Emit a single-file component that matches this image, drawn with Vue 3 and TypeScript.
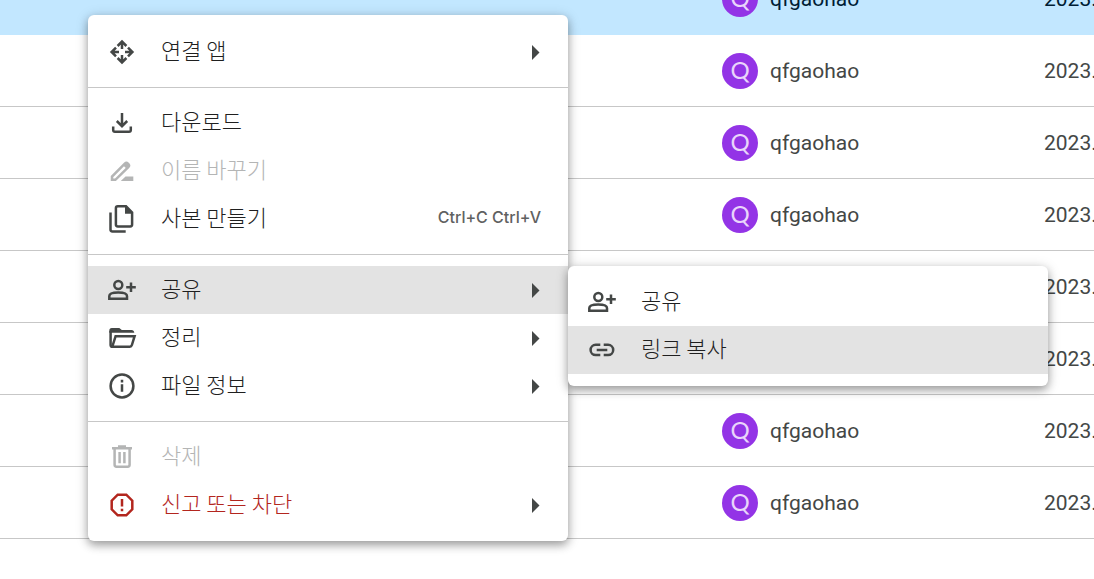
<script setup lang="ts">
import { ref } from 'vue'

type IconName =
  | 'move' | 'download' | 'rename' | 'copy' | 'share'
  | 'folder' | 'info' | 'trash' | 'report' | 'link'

interface Shape {
  d: string
  fill?: boolean
}

interface MenuItem {
  label: string
  icon: IconName
  shortcut?: string
  submenu?: boolean
  disabled?: boolean
  danger?: boolean
  children?: MenuItem[]
}

const icons: Record<IconName, Shape[]> = {
  move: [
    { d: 'M15 5V12M10.6 9L15 4.6L19.4 9' },
    { d: 'M15 25V18M10.6 21L15 25.4L19.4 21' },
    { d: 'M5 15H12M9 10.6L4.6 15L9 19.4' },
    { d: 'M25 15H18M21 10.6L25.4 15L21 19.4' },
  ],
  download: [
    { d: 'M15 5V18.2M9.8 13L15 18.2L20.2 13' },
    { d: 'M6.2 18.4V22Q6.2 23.8 8 23.8H22Q23.8 23.8 23.8 22V18.4' },
  ],
  rename: [
    { d: 'M5 23.8V20.6L17.8 7.6Q19.4 6.1 20.9 7.6L21.4 8.1Q22.8 9.6 21.3 11.1L8.4 23.8Z' },
    { d: 'M16 9.2L19 6.4L22.8 10L19.8 13Z', fill: true },
    { d: 'M13.8 25L18.5 20.4H26.3V25Z', fill: true },
  ],
  copy: [
    { d: 'M19 2.2H10.8Q8.9 2.2 8.9 4.1V20.6Q8.9 22.5 10.8 22.5H23.2Q25.1 22.5 25.1 20.6V8.6Z' },
    { d: 'M18 2L26 9.8H18Z', fill: true },
    { d: 'M3.5 8.4V25.5Q3.5 27.4 5.4 27.4H18.7' },
  ],
  share: [
    { d: 'M15.3 10A4 4 0 1 1 7.3 10A4 4 0 1 1 15.3 10Z' },
    { d: 'M2.3 23.7V20.9Q2.3 17.4 11.2 17.4Q20 17.4 20 20.9V23.7Z' },
    { d: 'M24 7.5V17M19.2 12.3H28.8' },
  ],
  folder: [
    { d: 'M2.3 7.5Q2.3 5 4.8 5H12.3L14.8 7H24.5Q27 7 27.3 9.8H2.3Z', fill: true },
    { d: 'M3.6 8V22Q3.6 23.7 5.5 23.7' },
    { d: 'M8.6 13.2H27.6L24.9 22Q24.4 23.7 22.8 23.7H5.3Z' },
  ],
  info: [
    { d: 'M26.4 15A11.4 11.4 0 1 1 3.6 15A11.4 11.4 0 1 1 26.4 15Z' },
    { d: 'M15 13.3V20.8M15 8.8V11.4' },
  ],
  trash: [
    { d: 'M5 5H11V3.3H19V5H25V7.5H5Z', fill: true },
    { d: 'M7.6 7V22.8Q7.6 24.7 9.5 24.7H20.7Q22.6 24.7 22.6 22.8V7' },
    { d: 'M12.6 10V21.3M17.4 10V21.3' },
  ],
  report: [
    { d: 'M10.7 4.7H19.3L25.3 10.7V19.3L19.3 25.3H10.7L4.7 19.3V10.7Z' },
    { d: 'M15 9V16.6M15 18.8V21.3' },
  ],
  link: [
    { d: 'M13.3 9.8H8.7A5.1 5.1 0 0 0 8.7 20H13.3M16.7 9.8H21.1A5.1 5.1 0 0 1 21.1 20H16.7' },
    { d: 'M9.7 15H20.3' },
  ],
}

const groups: MenuItem[][] = [
  [{ label: '연결 앱', icon: 'move', submenu: true }],
  [
    { label: '다운로드', icon: 'download' },
    { label: '이름 바꾸기', icon: 'rename', disabled: true },
    { label: '사본 만들기', icon: 'copy', shortcut: 'Ctrl+C Ctrl+V' },
  ],
  [
    {
      label: '공유',
      icon: 'share',
      submenu: true,
      children: [
        { label: '공유', icon: 'share' },
        { label: '링크 복사', icon: 'link' },
      ],
    },
    { label: '정리', icon: 'folder', submenu: true },
    { label: '파일 정보', icon: 'info', submenu: true },
  ],
  [
    { label: '삭제', icon: 'trash', disabled: true },
    { label: '신고 또는 차단', icon: 'report', submenu: true, danger: true },
  ],
]

const files = Array.from({ length: 8 }, (_, id) => ({ id, owner: 'qfgaohao', date: '2023.' }))
const selectedFile = ref(0)
const openItem = ref('공유')
const activeChild = ref('링크 복사')
</script>

<template>
  <main class="page">
    <table class="files">
      <tbody>
        <tr
          v-for="file in files"
          :key="file.id"
          :class="{ selected: file.id === selectedFile }"
          @click="selectedFile = file.id"
        >
          <td class="name"></td>
          <td class="owner">
            <div class="person">
              <span class="avatar" aria-hidden="true">Q</span>
              <span>{{ file.owner }}</span>
            </div>
          </td>
          <td class="date">{{ file.date }}</td>
        </tr>
      </tbody>
    </table>

    <div class="menu context" role="menu">
      <div v-for="(group, g) in groups" :key="g" class="group" role="group">
        <div v-for="item in group" :key="item.label" class="entry">
          <button
            type="button"
            role="menuitem"
            class="item"
            :class="{ active: item.label === openItem, danger: item.danger }"
            :disabled="item.disabled"
            @click="openItem = item.label"
          >
            <svg class="icon" viewBox="0 0 30 30" aria-hidden="true">
              <path
                v-for="(shape, s) in icons[item.icon]"
                :key="s"
                :d="shape.d"
                :class="shape.fill ? 'solid' : 'line'"
              />
            </svg>
            <span class="label">{{ item.label }}</span>
            <span v-if="item.shortcut" class="shortcut">{{ item.shortcut }}</span>
            <svg v-if="item.submenu" class="caret" viewBox="0 0 8 16" aria-hidden="true">
              <path d="M0 1L7.5 8.5L0 16Z" />
            </svg>
          </button>
          <div v-if="item.children && item.label === openItem" class="menu flyout" role="menu">
            <button
              v-for="child in item.children"
              :key="child.label"
              type="button"
              role="menuitem"
              class="item"
              :class="{ active: child.label === activeChild }"
              @click="activeChild = child.label"
            >
              <svg class="icon" viewBox="0 0 30 30" aria-hidden="true">
                <path
                  v-for="(shape, s) in icons[child.icon]"
                  :key="s"
                  :d="shape.d"
                  :class="shape.fill ? 'solid' : 'line'"
                />
              </svg>
              <span class="label">{{ child.label }}</span>
            </button>
          </div>
        </div>
      </div>
    </div>
  </main>
</template>

<style>
body {
  margin: 0;
  background: #fff;
}
</style>

<style scoped>
.page {
  position: relative;
  height: 100vh;
  overflow: hidden;
  font-family: Roboto, "Noto Sans CJK KR", sans-serif;
  color: #444746;
}

/* The list is scrolled so that the selected row is cut by the top edge. */
.files {
  width: 100%;
  margin-top: -37px;
  border-collapse: separate;
  border-spacing: 0;
  table-layout: fixed;
  font-size: 21px;
}

td {
  box-sizing: border-box;
  height: 72px;
  padding: 0;
  border-bottom: 1px solid #c7c7c7;
  white-space: nowrap;
}

.name {
  width: 66%;
}

.date {
  width: 50px;
}

.selected td {
  background: #c2e7ff;
  border-bottom-color: #c2e7ff;
  color: #001d35;
}

.person {
  display: flex;
  align-items: center;
  gap: 12px;
}

.avatar {
  display: flex;
  box-sizing: border-box;
  align-items: center;
  justify-content: center;
  width: 36px;
  height: 36px;
  padding-bottom: 2px;
  border-radius: 50%;
  background: #9334e6;
  color: #e9d5fb;
  font-family: Lato, sans-serif;
  font-size: 24px;
}

.menu {
  position: absolute;
  box-sizing: border-box;
  width: 480px;
  border-radius: 6px;
  background: #fff;
  box-shadow: 0 4px 8px rgba(0, 0, 0, 0.3), 0 2px 14px rgba(0, 0, 0, 0.16);
}

.context {
  top: 15px;
  left: 88px;
  padding: 13px 0 12px;
}

.flyout {
  top: 0;
  left: 100%;
  padding: 12px 0;
}

.group + .group {
  margin-top: 11px;
  padding-top: 11px;
  border-top: 1px solid #c7c7c7;
}

.entry {
  position: relative;
}

.item {
  display: flex;
  align-items: center;
  width: 100%;
  height: 48px;
  padding: 0 27px 0 19px;
  border: 0;
  background: none;
  color: #444746;
  font-family: "Noto Sans CJK KR", sans-serif;
  font-size: 22px;
  font-weight: 300;
  line-height: 32px;
  text-align: left;
}

.item.active {
  background: #e3e3e3;
}

.item:disabled {
  color: #b4b5b5;
}

.item.danger {
  color: #b3261e;
}

.icon {
  flex: none;
  width: 30px;
  height: 30px;
  margin-right: 24px;
}

.line {
  fill: none;
  stroke: currentColor;
  stroke-width: 2.5;
}

.solid {
  fill: currentColor;
}

.label {
  flex: 1;
  padding-bottom: 6px;
  color: #1f1f1f;
}

.item:disabled .label,
.danger .label {
  color: inherit;
}

.shortcut {
  padding-bottom: 4px;
  color: #5f6161;
  font-family: Inter, sans-serif;
  font-size: 16px;
  font-weight: 500;
}

.caret {
  width: 8px;
  height: 16px;
  margin-right: 1px;
  fill: #444746;
}
</style>
